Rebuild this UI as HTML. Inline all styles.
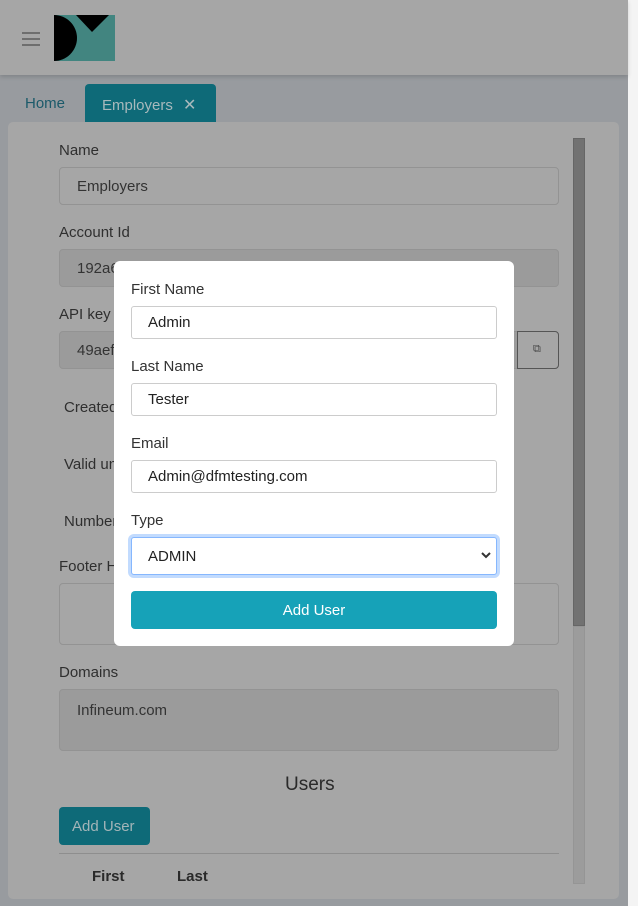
<!DOCTYPE html>
<html><head><meta charset="utf-8"><style>
*{box-sizing:border-box;margin:0;padding:0}
body{width:638px;height:906px;overflow:hidden;background:#989b9f;font-family:"Liberation Sans",sans-serif;font-size:15px;color:#333;position:relative}
.abs{position:absolute}
.strip{left:628px;top:0;width:10px;height:906px;background:#f4f4f4}
.header{left:0;top:0;width:628px;height:75px;background:#a6a6a6;box-shadow:0 2px 4px rgba(0,0,0,.15)}
.ham{left:22px;width:18px;height:2px;background:#6e6e6e}
.card{left:8px;top:122px;width:611px;height:777px;background:#a6a6a6;border-radius:5px}
.lbl{color:#2f2f2f}
.inp{left:59px;width:500px;height:38px;border:1px solid #939393;border-radius:4px;padding:10px 17px 0;color:#333}
.dis{background:#9b9b9b}
.thumb{left:573px;top:138px;width:12px;height:488px;background:#727272;border:1px solid #666}
.track{left:573px;top:626px;width:12px;height:258px;background:#9c9c9c;border:1px solid #959595}
.modal{left:114px;top:261px;width:400px;height:385px;background:#fff;border-radius:6px}
.m{color:#333}
.mi{left:131px;width:366px;height:33px;border:1px solid #ccc;border-radius:3px;padding:7px 16px 0;color:#222;background:#fff}
</style></head><body>
<div class="abs strip"></div>
<div class="abs header"></div>
<div class="abs ham" style="top:32px"></div>
<div class="abs ham" style="top:38px"></div>
<div class="abs ham" style="top:44px"></div>
<svg class="abs" style="left:54px;top:15px" width="61" height="46" viewBox="0 0 61 46">
<rect width="61" height="46" fill="#428580"/>
<path d="M0 0 A23 23 0 0 1 0 46 Z" fill="#000"/>
<path d="M22 0 H55 L38 17 Z" fill="#000"/>
</svg>
<div class="abs" style="left:25px;top:95px;color:#1b5a6a">Home</div>
<div class="abs" style="left:85px;top:84px;width:131px;height:38px;background:#0e6a78;border-radius:4px 4px 0 0;color:#a8b9bc;padding:11px 0 0 17px">Employers <span style="margin-left:6px;font-size:16px">✕</span></div>
<div class="abs card"></div>
<div class="abs lbl" style="left:59px;top:142px">Name</div>
<div class="abs inp" style="top:167px">Employers</div>
<div class="abs lbl" style="left:59px;top:224px">Account Id</div>
<div class="abs inp dis" style="top:249px">192a6</div>
<div class="abs lbl" style="left:59px;top:306px">API key</div>
<div class="abs inp dis" style="top:331px">49aef</div>
<div class="abs" style="left:517px;top:331px;width:42px;height:38px;border:1px solid #555;border-radius:0 4px 4px 0;background:#a6a6a6;font-size:11px;padding:11px 0 0 15px;color:#444">⧉</div>
<div class="abs lbl" style="left:64px;top:399px">Created</div>
<div class="abs lbl" style="left:64px;top:456px">Valid until</div>
<div class="abs lbl" style="left:64px;top:513px">Number</div>
<div class="abs lbl" style="left:59px;top:558px">Footer HTML</div>
<div class="abs inp" style="top:583px;height:62px"></div>
<div class="abs lbl" style="left:59px;top:664px">Domains</div>
<div class="abs inp dis" style="top:689px;height:62px;padding-top:12px">Infineum.com</div>
<div class="abs" style="left:285px;top:774px;font-size:19px;color:#2a2a2a">Users</div>
<div class="abs" style="left:59px;top:807px;width:91px;height:38px;background:#0e6a78;border-radius:4px;color:#a3b5b8;padding:11px 0 0 13px">Add User</div>
<div class="abs" style="left:59px;top:853px;width:500px;height:1px;background:#8e8e8e"></div>
<div class="abs" style="left:92px;top:868px;font-weight:bold;color:#2a2a2a">First</div>
<div class="abs" style="left:177px;top:868px;font-weight:bold;color:#2a2a2a">Last</div>
<div class="abs thumb"></div>
<div class="abs track"></div>
<div class="abs modal"></div>
<div class="abs m" style="left:131px;top:281px">First Name</div>
<div class="abs mi" style="top:306px">Admin</div>
<div class="abs m" style="left:131px;top:358px">Last Name</div>
<div class="abs mi" style="top:383px">Tester</div>
<div class="abs m" style="left:131px;top:435px">Email</div>
<div class="abs mi" style="top:460px">Admin@dfmtesting.com</div>
<div class="abs m" style="left:131px;top:512px">Type</div>
<div class="abs mi" style="top:537px;height:38px;border:1px solid #86b7fe;box-shadow:0 0 0 3px #c2dbfe;padding-top:10px">ADMIN</div>
<svg class="abs" style="left:481px;top:551px" width="10" height="8" viewBox="0 0 10 8"><path d="M1 2 L5 6 L9 2" stroke="#333" stroke-width="2" fill="none"/></svg>
<div class="abs" style="left:131px;top:591px;width:366px;height:38px;background:#16a2b8;border-radius:4px;color:#fff;text-align:center;padding-top:11px">Add User</div>
</body></html>
